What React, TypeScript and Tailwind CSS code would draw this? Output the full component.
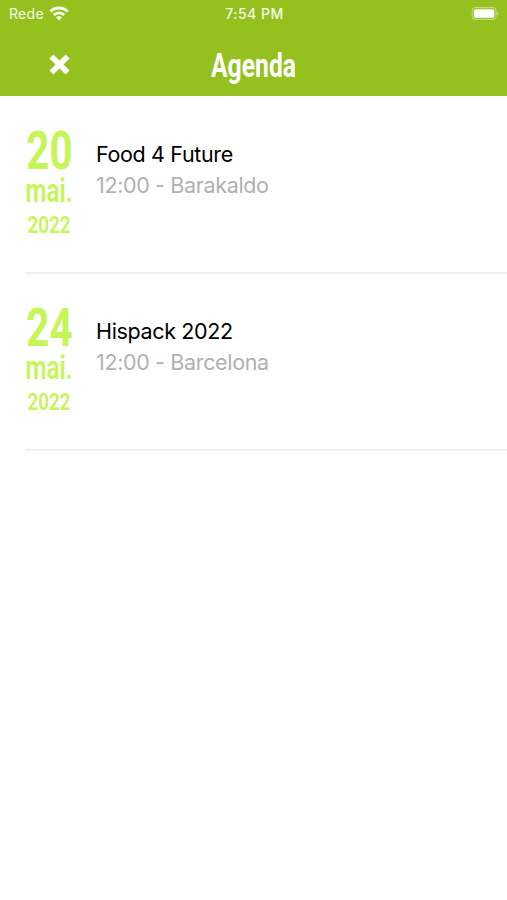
type AgendaEvent = {
  day: string;
  month: string;
  year: string;
  title: string;
  details: string;
};

const events: AgendaEvent[] = [
  { day: "20", month: "mai.", year: "2022", title: "Food 4 Future", details: "12:00 - Barakaldo" },
  { day: "24", month: "mai.", year: "2022", title: "Hispack 2022", details: "12:00 - Barcelona" },
];

function WifiIcon() {
  return (
    <svg className="mb-[2px] h-[15px] w-5" viewBox="0 0 20 15" fill="none" stroke="currentColor" strokeWidth="2.8">
      <path d="M1.3 5.6a12.3 12.3 0 0 1 17.4 0" />
      <path d="M4.8 9.1a7.4 7.4 0 0 1 10.4 0" />
      <path d="M10 14.4 7.1 11.5a4.1 4.1 0 0 1 5.8 0Z" fill="currentColor" stroke="none" />
    </svg>
  );
}

function BatteryIcon() {
  return (
    <svg className="mb-[2px] h-[13px] w-[29px]" viewBox="0 0 30 14">
      <rect x="0.7" y="0.7" width="25.6" height="12.6" rx="3.6" fill="none" stroke="white" strokeOpacity="0.4" strokeWidth="1.2" />
      <rect x="2.5" y="2.4" width="22" height="9.2" rx="2" fill="white" />
      <path d="M27.5 4.8c1.9.6 1.9 3.8 0 4.4Z" fill="white" fillOpacity="0.5" />
    </svg>
  );
}

function StatusBar() {
  return (
    <div className="grid h-7 grid-cols-3 items-center pl-[9px] pr-[7px] text-[14px] text-white/90">
      <div className="flex items-center gap-[5px]">
        <span className="pb-px tracking-[0.3px]">Rede</span>
        <WifiIcon />
      </div>
      <span className="pb-px text-center font-medium tracking-[0.5px]">7:54 PM</span>
      <div className="flex justify-end">
        <BatteryIcon />
      </div>
    </div>
  );
}

function EventRow({ event }: { event: AgendaEvent }) {
  return (
    <li className="ml-[25px] flex h-[177px] border-b-2 border-[#f0f0f0] pt-7">
      {/* Date */}
      <div className="flex w-12 shrink-0 flex-col items-center whitespace-nowrap font-['Roboto',sans-serif] font-semibold text-[#c6f558]">
        <span className="scale-x-[0.76] text-[53px] font-bold leading-[53px]">{event.day}</span>
        <span className="scale-x-[0.71] text-[34px] leading-[24px]">{event.month}</span>
        <span className="mt-[11px] scale-x-[0.77] text-[24.5px] leading-[24px]">{event.year}</span>
      </div>

      <div className="ml-[23px] pt-[14px] text-[21.5px] leading-[31px] tracking-[-0.35px]">
        <h2 className="text-black">{event.title}</h2>
        <p className="text-[#b1b1b1]">{event.details}</p>
      </div>
    </li>
  );
}

export default function App() {
  return (
    <div className="min-h-screen bg-white font-['Inter',sans-serif]">
      <header className="h-24 bg-[#95c11f]">
        <StatusBar />
        <div className="grid h-[68px] grid-cols-[120px_1fr_120px] items-center text-white">
          <button className="ml-[49px] mt-1 w-[21px]" aria-label="Fechar">
            <svg className="size-[21px]" viewBox="0 0 21 21" stroke="currentColor" strokeWidth="5.6">
              <path d="M2.4 2.4 18.6 18.6M18.6 2.4 2.4 18.6" />
            </svg>
          </button>
          <h1 className="mt-[7px] scale-x-[0.76] text-center font-['Roboto',sans-serif] text-[32.5px] font-bold leading-10">Agenda</h1>
        </div>
      </header>

      <ul className="pt-px">
        {events.map((event) => (
          <EventRow key={event.title} event={event} />
        ))}
      </ul>
    </div>
  );
}
